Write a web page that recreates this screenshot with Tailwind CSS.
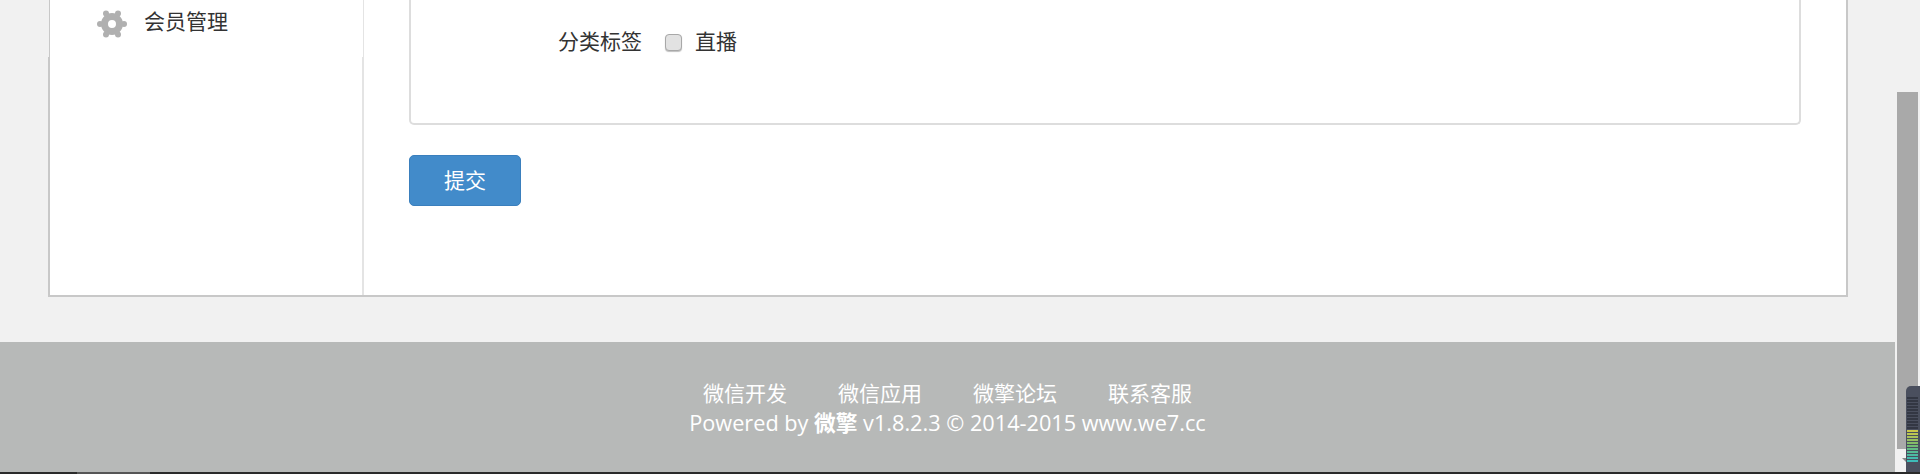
<!DOCTYPE html>
<html lang="zh">
<head>
    <meta charset="UTF-8">
    <title>微擎</title>
    <script src="https://cdn.jsdelivr.net/npm/@tailwindcss/browser@4"></script>
</head>
<body class="h-[474px] overflow-hidden bg-[#f1f1f1] font-['Liberation_Sans','Noto_Sans_CJK_SC',sans-serif] text-[#333]">
<div class="relative flex h-[474px]">
    <div class="w-[1895px] shrink-0">
        <!-- main box -->
        <div class="ml-[48px] flex h-[297px] w-[1800px] border-b-2 border-[#c8c8c8]">
            <div class="flex w-[316px] shrink-0 flex-col">
                <div class="ml-px flex h-[57px] items-start border-x border-l-[#c8c8c8] border-r-[#e4e4e4] bg-white pl-[47px] pt-[9px]">
                    <svg class="h-[30px] w-[30px]" viewBox="0 0 30 30" fill="#b0b0b0">
                        <circle cx="15" cy="15" r="7.500" fill="none" stroke="#b0b0b0" stroke-width="7"/>
                        <circle cx="27" cy="15" r="3"/>
                        <circle cx="21" cy="4.600" r="3"/>
                        <circle cx="9" cy="4.600" r="3"/>
                        <circle cx="3" cy="15" r="3"/>
                        <circle cx="9" cy="25.400" r="3"/>
                        <circle cx="21" cy="25.400" r="3"/>
                    </svg>
                    <span class="ml-[17px] mt-px text-[21px] leading-[24px]">会员管理</span>
                </div>
                <div class="flex-1 border-x-2 border-l-[#c8c8c8] border-r-[#e4e4e4] bg-white"></div>
            </div>
            <div class="flex-1 border-r-2 border-[#c8c8c8] bg-white px-[45px]">
                <div class="h-[125px] rounded-b-[5px] border-x-2 border-b-2 border-[#ddd] pt-[28px]">
                    <div class="flex items-center text-[21px] leading-[28px]">
                        <span class="ml-[147px] w-[84px]">分类标签</span>
                        <span class="ml-[23px] h-[17px] w-[17px] rounded-[4px] border border-[#a8a8a8] bg-[#e2e2e2] shadow-[0_1px_1px_rgba(0,0,0,0.25)]"></span>
                        <span class="ml-[13px]">直播</span>
                    </div>
                </div>
                <button class="mt-[30px] h-[51px] w-[112px] rounded-[5px] border border-[#3a7fbd] bg-[#428bca] text-[21px] text-white">提交</button>
            </div>
        </div>
        <!-- footer -->
        <div class="mt-[45px] h-[130px] bg-[#b7b9b8] pt-[37px] text-center text-white">
            <div class="flex justify-center gap-[51px] text-[21px] leading-[30px]">
                <span>微信开发</span><span>微信应用</span><span>微擎论坛</span><span>联系客服</span>
            </div>
            <div class="font-['Open_Sans','Noto_Sans_CJK_SC',sans-serif] text-[21.7px] leading-[28px]">Powered by <b>微擎</b> v1.8.2.3 © 2014-2015 www.we7.cc</div>
        </div>
    </div>
    <!-- scrollbar -->
    <div class="relative flex-1">
        <div class="absolute left-[2px] top-[92px] h-[357px] w-[21px] bg-[#a9a9a9]"></div>
        <div class="absolute left-[7px] top-[458px] h-0 w-0 border-x-[4px] border-t-[4px] border-x-transparent border-t-[#888]"></div>
        <!-- level meter widget -->
        <div class="absolute left-[11px] top-[386px] flex h-[88px] w-[14px] flex-col items-center gap-[1px] rounded-tl-[5px] bg-[#4a4f5e] pl-[1px] pr-[2px] pt-[11px]">
            <span class="h-[2px] w-full bg-[#333743]"></span>
            <span class="h-[2px] w-full bg-[#333743]"></span>
            <span class="h-[2px] w-full bg-[#333743]"></span>
            <span class="h-[2px] w-full bg-[#333743]"></span>
            <span class="h-[2px] w-full bg-[#333743]"></span>
            <span class="h-[2px] w-full bg-[#333743]"></span>
            <span class="h-[2px] w-full bg-[#333743]"></span>
            <span class="h-[2px] w-full bg-[#333743]"></span>
            <span class="h-[2px] w-full bg-[#333743]"></span>
            <span class="h-[2px] w-full bg-[#333743]"></span>
            <span class="h-[2px] w-full bg-[#333743]"></span>
            <span class="h-[2px] w-full bg-[#c9c74a]"></span>
            <span class="h-[2px] w-full bg-[#bcc652]"></span>
            <span class="h-[2px] w-full bg-[#a9c25a]"></span>
            <span class="h-[2px] w-full bg-[#97bf60]"></span>
            <span class="h-[2px] w-full bg-[#85bd68]"></span>
            <span class="h-[2px] w-full bg-[#72bb74]"></span>
            <span class="h-[2px] w-full bg-[#62bb84]"></span>
            <span class="h-[2px] w-full bg-[#56bb94]"></span>
            <span class="h-[2px] w-full bg-[#4cbba2]"></span>
            <span class="h-[2px] w-full bg-[#44bbae]"></span>
            <span class="h-[2px] w-full bg-[#3ebbb8]"></span>
        </div>
    </div>
    <!-- bottom strip -->
    <div class="absolute bottom-0 left-0 h-[2px] w-full bg-[#2a2a2a]">
        <div class="ml-[77px] h-full w-[73px] bg-[#555]"></div>
    </div>
</div>
</body>
</html>
